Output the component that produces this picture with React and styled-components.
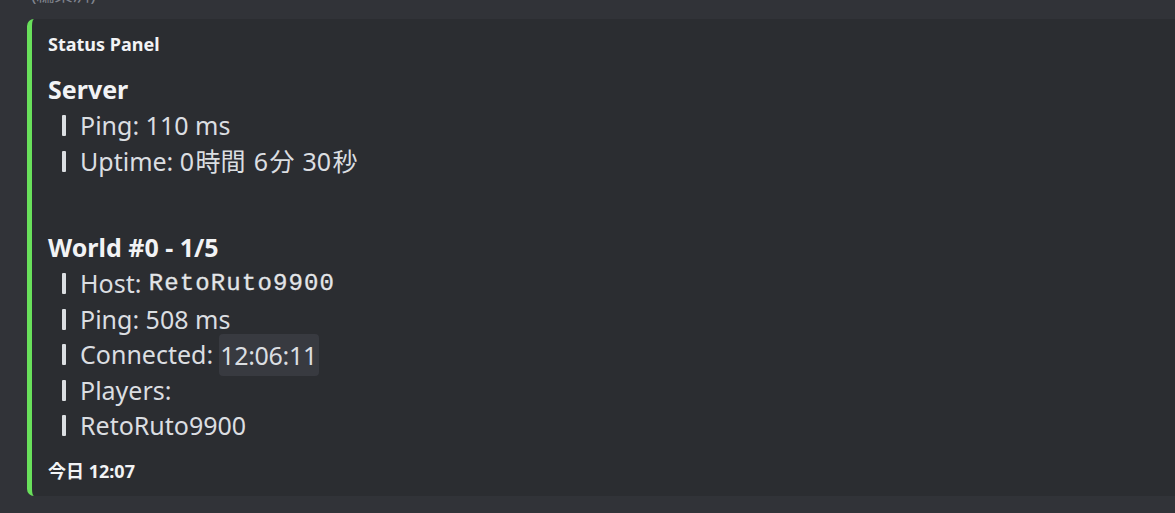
import React from "react";
import styled, { createGlobalStyle } from "styled-components";

const GlobalStyle = createGlobalStyle`
  html, body {
    margin: 0;
    padding: 0;
    background: #313338;
    overflow: hidden;
  }
  body {
    font-family: "Noto Sans", "Noto Sans CJK JP", sans-serif;
  }
`;

const Page = styled.div`
  width: 1175px;
  height: 513px;
  background: #313338;
  overflow: hidden;
  box-sizing: border-box;
  padding-left: 27px;
`;

const Edited = styled.div`
  height: 19px;
  padding-left: 4px;
  overflow: hidden;
`;

const EditedText = styled.div`
  margin-top: -15px;
  font-size: 18px;
  line-height: 19px;
  color: #80848e;
`;

const Embed = styled.div`
  margin-right: -20px;
  height: 477px;
  box-sizing: border-box;
  background: #2b2d31;
  border-left: 5px solid #69e05b;
  border-radius: 7px;
  padding: 13px 16px 0 16px;
  display: flex;
  flex-direction: column;
`;

const Author = styled.div`
  font-size: 18px;
  font-weight: 700;
  line-height: 24px;
  color: #f2f3f5;
  margin-bottom: 14px;
`;

const Heading = styled.div`
  font-size: 25px;
  font-weight: 700;
  line-height: 38px;
  color: #f2f3f5;
  margin-top: ${(p) => p.$gap || 0}px;
`;

const Line = styled.div`
  display: flex;
  align-items: center;
  font-size: 25px;
  line-height: 35.5px;
  height: 35.5px;
  color: #dbdee1;
  white-space: pre;
`;

const Bar = styled.span`
  display: inline-block;
  width: 4px;
  height: 21px;
  background: #dbdee1;
  border-radius: 1px;
  margin-left: 14px;
  margin-right: 14px;
`;

const Kanji = styled.span`
  margin: 0 1.5px;
`;

const Mono = styled.span`
  font-family: "Liberation Mono", monospace;
  font-size: 24px;
  letter-spacing: 1.1px;
  color: #e3e5e8;
  -webkit-text-stroke: 0.3px #e3e5e8;
  margin-left: 1px;
`;

const Stamp = styled.span`
  background: #383a40;
  border-radius: 4px;
  padding: 0 2px 0 1px;
  margin-left: 6px;
  line-height: 42px;
  letter-spacing: -0.3px;
`;

const Footer = styled.div`
  margin-top: 15.5px;
  font-size: 18px;
  font-weight: 700;
  line-height: 24px;
  color: #f2f3f5;
`;

const Row = ({ children }) => (
  <Line>
    <Bar />
    {children}
  </Line>
);

export default function App() {
  return (
    <>
      <GlobalStyle />
      <Page>
        <Edited>
          <EditedText>(編集済)</EditedText>
        </Edited>
        <Embed>
          <Author>Status Panel</Author>
          <Heading>Server</Heading>
          <Row>Ping: 110 ms</Row>
          <Row>
            Uptime: 0<Kanji>時間</Kanji> 6<Kanji>分</Kanji> 30<Kanji>秒</Kanji>
          </Row>
          <Heading $gap={49}>World #0 - 1/5</Heading>
          <Row>
            Host: <Mono>RetoRuto9900</Mono>
          </Row>
          <Row>Ping: 508 ms</Row>
          <Row>
            Connected:<Stamp>12:06:11</Stamp>
          </Row>
          <Row>Players:</Row>
          <Row>RetoRuto9900</Row>
          <Footer>今日 12:07</Footer>
        </Embed>
      </Page>
    </>
  );
}
